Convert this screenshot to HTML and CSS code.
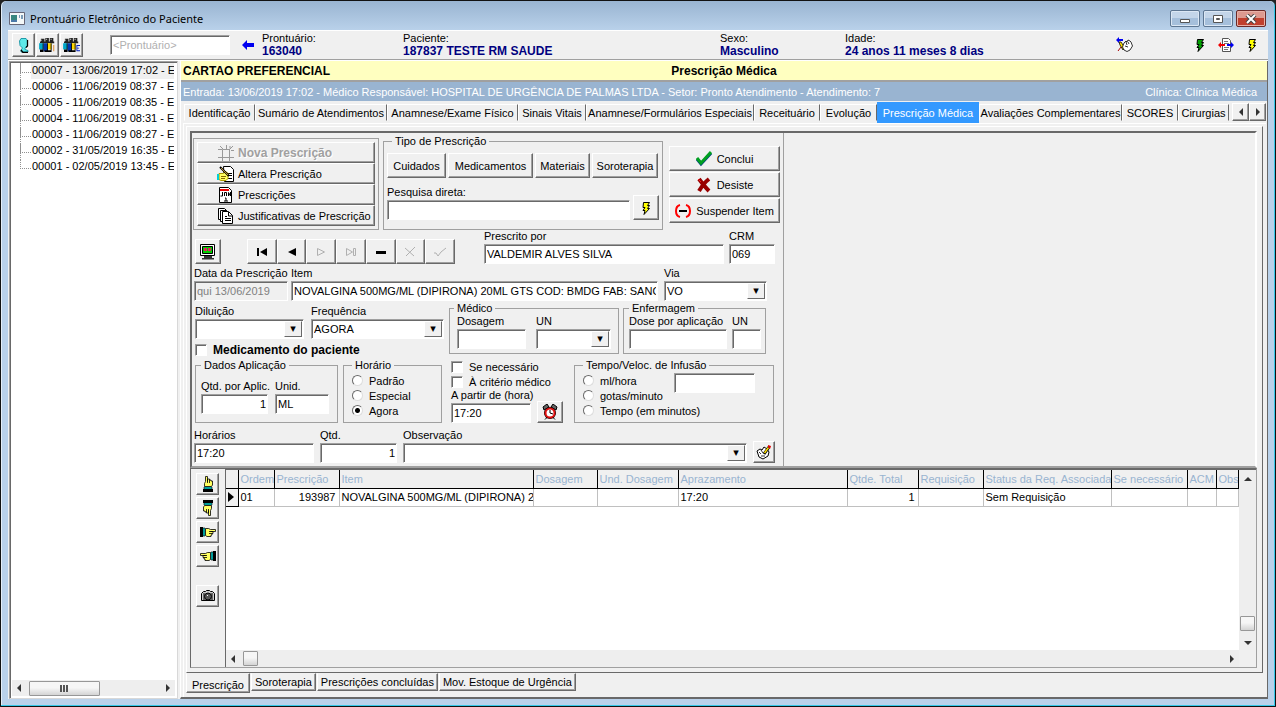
FILE: index.html
```html
<!DOCTYPE html>
<html lang="pt-BR">
<head>
  <meta charset="UTF-8" />
  <meta name="viewport" content="width=device-width, initial-scale=1.0" />
  <title>Prontuário Eletrônico do Paciente</title>
  <link rel="stylesheet" href="styles.css">
</head>
<body>
  <!-- shared icons -->
  <svg class="sprite" width="0" height="0">
    <symbol id="bolt" viewBox="0 0 16 16">
      <path d="M5.500 2.500h6l-2 3h2l-2 3h2l-5.500 6 1-4h-2l2-3h-2z" fill="currentColor" stroke="#000"/>
    </symbol>
    <symbol id="hand" viewBox="0 0 16 16">
      <path d="M0 3h3v10H0z" fill="#000"/>
      <path d="M3 4h2v8H3z" fill="#00e0e0" stroke="#000" stroke-width=".6"/>
      <path d="M5.500 4.500h3l2 1h5v2h-5 2.500v2h-1v1.500h-1v1.500h-4l-1.500-1z" fill="#ffff60" stroke="#000" stroke-width=".8"/>
      <path d="M9 7.500h3M9 9.500h3" stroke="#000" stroke-width=".8"/>
    </symbol>
    <symbol id="people" viewBox="0 0 20 18">
      <g fill="#222"><path d="M2 2h4v4H2zM7 1h4v5H7zM12 1h4v5h-4zM1 5h16v2H1z"/></g>
      <path d="M0 7h5v7H0z" fill="#00a8c8"/>
      <path d="M5 7h5v9H5z" fill="#0038b0"/>
      <path d="M9 7h5v7H9z" fill="#ffd800"/>
      <path d="M1 14h4v3H1zM6 15h8v2H6zM4 7h1v9H4zM9 7h1v9H9zM13 7h1v9h-1z" fill="#000"/>
      <path d="M2 3h1v1H2zM8 2h1v1H8zM13 2h1v1h-1z" fill="#fff"/>
    </symbol>
  </svg>

  <div class="window">
    <header class="titlebar">
      <svg class="app-icon" width="16" height="13" viewBox="0 0 16 13">
        <path d="M.5.500h15v12H.5z" fill="#f4f8f8" stroke="#667"/>
        <path d="M2 3h6v7H2z" fill="#39877f"/><path d="M2 8h6v2H2z" fill="#4a78a8"/>
        <path d="M10 3h1v3h-1zM12 3h2v4h-2z" fill="#7c9cb8"/>
      </svg>
      <h1>Prontuário Eletrônico do Paciente</h1>
      <div class="window-buttons">
        <button aria-label="Minimizar"><svg width="12" height="10" viewBox="0 0 12 10"><path d="M1.500 5.500h9v3h-9z" fill="#fff" stroke="#555"/></svg></button>
        <button aria-label="Restaurar"><svg width="12" height="10" viewBox="0 0 12 10"><path d="M1.500 1.500h9v7h-9z" fill="#fff" stroke="#555"/><path d="M4.500 4.500h3v1h-3z" fill="#9ab" stroke="#555"/></svg></button>
        <button class="close" aria-label="Fechar"><svg width="12" height="10" viewBox="0 0 12 10"><path d="M2 1l8 8M10 1L2 9" stroke="#444" stroke-width="4"/><path d="M2 1l8 8M10 1L2 9" stroke="#fff" stroke-width="2"/></svg></button>
      </div>
    </header>

    <div class="toolbar">
      <div class="tool-buttons">
        <button class="btn" aria-label="Paciente">
          <svg width="16" height="16" viewBox="0 0 16 16"><path d="M5 1.500h5l1.500 2v5L10 10l-1 1v1.500l3 1V15H5v-2l1.500-2L4 8.500 3.500 4z" fill="#5ee8e8" stroke="#089" stroke-width=".8"/><path d="M11.500 3v6L10 10.500M5 13l2 2.500h5" fill="none" stroke="#000" stroke-width="1.300"/></svg>
        </button>
        <button class="btn" aria-label="Internados">
          <svg width="18" height="16" viewBox="0 0 20 18"><use href="#people"/><path d="M16 9h1v7h-1z" fill="#e08020"/></svg>
        </button>
        <button class="btn" aria-label="Externos">
          <svg width="18" height="16" viewBox="0 0 20 18"><use href="#people"/><path d="M15 9h4v1h-3v2h2v1h-2v2h3v1h-4z" fill="#0020c0"/></svg>
        </button>
      </div>
      <input class="box search" type="text" placeholder="&lt;Prontuário&gt;" aria-label="Prontuário">
      <svg class="back" width="12" height="10" viewBox="0 0 12 10"><path d="M0 5l5-5v3h7v4H5v3z" fill="#0000f0"/></svg>
      <dl class="patient">
        <div><dt>Prontuário:</dt><dd>163040</dd></div>
        <div><dt>Paciente:</dt><dd>187837 TESTE RM SAUDE</dd></div>
        <div><dt>Sexo:</dt><dd>Masculino</dd></div>
        <div><dt>Idade:</dt><dd>24 anos 11 meses 8 dias</dd></div>
      </dl>
      <div class="quick">
        <button class="flat first" aria-label="Assinar">
          <svg width="18" height="16" viewBox="0 0 18 16"><path d="M0 3l3-3v2h4v2H3v2z" fill="#0000f0"/><path d="M3 5h2l4 6-2 2-3-5z" fill="#ffe000" stroke="#000" stroke-width=".8"/><path d="M2 14l3-4" stroke="#a00"/><path d="M8 6l2-2 1 1 1-2 2 1 1 1 1.500 4-2.500 4-3 1.500L8 13l-1.500-3z" fill="#fff" stroke="#000" stroke-width=".8"/><path d="M10 5l1 3M12 5l1 2M9 9l3 1" stroke="#000" stroke-width=".8"/></svg>
        </button>
        <button class="flat green" aria-label="Executar"><svg width="16" height="16"><use href="#bolt"/></svg></button>
        <button class="flat" aria-label="Transferir">
          <svg width="16" height="16" viewBox="0 0 16 16"><path d="M4.500 1.500h6l2 2v11h-8z" fill="#fff" stroke="#555"/><path d="M6 4.500h4M6 6.500h5M6 10.500h5M6 12.500h4" stroke="#777"/><path d="M0 8l3-3v2h4v2H3v2z" fill="#f00000"/><path d="M16 8l-3-3v2H9v2h4v2z" fill="#0000f0"/></svg>
        </button>
        <button class="flat yellow" aria-label="Atualizar"><svg width="16" height="16"><use href="#bolt"/></svg></button>
      </div>
    </div>

    <div class="content">
      <aside class="sidebar">
        <ul class="tree">
          <li class="selected"><span>00007 - 13/06/2019 17:02 - E</span></li>
          <li><span>00006 - 11/06/2019 08:37 - E</span></li>
          <li><span>00005 - 11/06/2019 08:35 - E</span></li>
          <li><span>00004 - 11/06/2019 08:31 - E</span></li>
          <li><span>00003 - 11/06/2019 08:27 - E</span></li>
          <li><span>00002 - 31/05/2019 16:35 - E</span></li>
          <li><span>00001 - 02/05/2019 13:45 - E</span></li>
        </ul>
        <div class="scroll-h"><i class="arrow left"></i><b class="thumb wide"></b><i class="arrow right"></i></div>
      </aside>

      <main>
        <div class="banner"><strong>CARTAO PREFERENCIAL</strong><h2>Prescrição Médica</h2><span></span></div>
        <div class="entry">
          <span>Entrada: 13/06/2019 17:02 - Médico Responsável: HOSPITAL DE URGÊNCIA DE PALMAS LTDA - Setor: Pronto Atendimento - Atendimento: 7</span>
          <span>Clínica: Clínica Médica</span>
        </div>
        <div class="tab-strip">
          <nav class="tabs">
            <button>Identificação</button>
            <button>Sumário de Atendimentos</button>
            <button>Anamnese/Exame Físico</button>
            <button>Sinais Vitais</button>
            <button>Anamnese/Formulários Especiais</button>
            <button>Receituário</button>
            <button>Evolução</button>
            <button class="active">Prescrição Médica</button>
            <button>Avaliações Complementares</button>
            <button>SCORES</button>
            <button>Cirurgias</button>
          </nav>
          <div class="spin">
            <button class="btn" aria-label="Abas anteriores"><i class="arrow left"></i></button>
            <button class="btn" aria-label="Próximas abas"><i class="arrow right"></i></button>
          </div>
        </div>

        <div class="page">
          <div class="subpage">
            <div class="work">
              <form class="form">
                <div class="row row-top">
                  <div class="actions">
                    <button type="button" class="btn" disabled>
                      <svg width="18" height="16" viewBox="0 0 18 16"><path d="M5.500 4.500h7v8h-7zM1 4.500h4M1 12.500h4M12 12.500h5M5.500 12v4M12.500 12v4M3 1l3 3M9.500 0v4M12 5l4-4M13 3.500V1M14 5.500h3" fill="none" stroke="#999"/></svg>
                      <span>Nova Prescrição</span></button>
                    <button type="button" class="btn">
                      <svg width="18" height="16" viewBox="0 0 18 16"><path d="M6.500.500h7l3 3v12h-9z" fill="#fff" stroke="#000"/><path d="M11 7.500h4M11 9.500h4M10 12.500h5" stroke="#000"/><path d="M2 7.500h4l3-2 2 2v5l-2 2H4l-2-1z" fill="#ffff60" stroke="#a90"/><path d="M3 1l9 9" stroke="#000" stroke-width="2"/><path d="M4 2l7 7" stroke="#e8b040" stroke-width=".8"/><path d="M0 8h2v6H0z" fill="#00d0d8"/><path d="M4 10.500h5M4 12.500h4" stroke="#860"/></svg>
                      <span>Altera Prescrição</span></button>
                    <button type="button" class="btn">
                      <svg width="18" height="16" viewBox="0 0 18 16"><path d="M2.500.500h9l3 3v12h-12z" fill="#fff" stroke="#000"/><path d="M3 3h9" stroke="#e00" stroke-width="2"/><path d="M5.500 5v4h-2M7.500 9V5.500h2V9M11.500 9V5.500l2 3.500V5M8 11h1v3M7 14h4" fill="none" stroke="#000"/></svg>
                      <span>Prescrições</span></button>
                    <button type="button" class="btn">
                      <svg width="18" height="16" viewBox="0 0 18 16"><path d="M1.500.500h6l3 3v8h-9z" fill="#fff" stroke="#000"/><path d="M3.500 2.500h6l3 3v8h-9z" fill="#fff" stroke="#000"/><path d="M5.500 3.500h6l4 4v8h-10z" fill="#fff" stroke="#000"/><path d="M11.500 4v4h4M8 8.500h2M8 10.500h6M8 12.500h6" fill="none" stroke="#000"/></svg>
                      <span>Justificativas de Prescrição</span></button>
                  </div>

                  <fieldset class="kind">
                    <legend>Tipo de Prescrição</legend>
                    <div class="kind-buttons">
                      <button type="button" class="btn">Cuidados</button>
                      <button type="button" class="btn">Medicamentos</button>
                      <button type="button" class="btn">Materiais</button>
                      <button type="button" class="btn">Soroterapia</button>
                    </div>
                    <div class="direct">
                      <div class="field"><label for="pesquisa">Pesquisa direta:</label><input class="box" id="pesquisa" type="text"></div>
                      <button type="button" class="btn tool yellow" aria-label="Pesquisar"><svg width="16" height="16"><use href="#bolt"/></svg></button>
                    </div>
                  </fieldset>

                  <div class="finish">
                    <button type="button" class="btn"><svg width="16" height="16" viewBox="0 0 16 16"><path d="M1 8l4 5L15 2" fill="none" stroke="#004080" stroke-width="3"/><path d="M1 7l4 5L15 1" fill="none" stroke="#00a020" stroke-width="3"/></svg>Conclui</button>
                    <button type="button" class="btn"><svg width="16" height="16" viewBox="0 0 16 16"><path d="M3 2c3 4 6 8 10 12M13 2C9 5 6 9 3 14" fill="none" stroke="#900" stroke-width="4"/><path d="M2 2l3 3" stroke="#f02020"/></svg>Desiste</button>
                    <button type="button" class="btn"><svg width="16" height="16" viewBox="0 0 16 16"><path d="M5 2Q1 3 1 8t4 6M11 2q4 1 4 6t-4 6" fill="none" stroke="#f00" stroke-width="2"/><path d="M4 7h8v2H4z"/></svg>Suspender Item</button>
                  </div>
                </div>

                <div class="row row-nav">
                  <button type="button" class="btn tool" aria-label="Monitor">
                    <svg width="16" height="16" viewBox="0 0 16 16"><path d="M.5.500h14v11H.5z" fill="#fff" stroke="#000"/><path d="M2.500 2.500h10v7h-10z" fill="#00d000" stroke="#000"/><path d="M4 4h3v3H4zM8 4h3v3H8z" fill="#e02060"/><path d="M4 12h8v2H4zM2 14h12v1.500H2z" fill="#333"/></svg>
                  </button>
                  <div class="navigator">
                    <button type="button" class="btn" aria-label="Primeiro"><svg width="12" height="10"><path d="M1 1h2v8H1zM11 1v8L4 5z"/></svg></button>
                    <button type="button" class="btn" aria-label="Anterior"><svg width="12" height="10"><path d="M10 1v8L2 5z"/></svg></button>
                    <button type="button" class="btn" aria-label="Próximo" disabled><svg width="12" height="10"><path class="ghost" d="M2.500 1.500v7l7-3.500z"/></svg></button>
                    <button type="button" class="btn" aria-label="Último" disabled><svg width="12" height="10"><path class="ghost" d="M1.500 1.500v7l6-3.500zM8.500 1.500h2v7h-2z"/></svg></button>
                    <button type="button" class="btn" aria-label="Remover"><svg width="12" height="10"><path d="M1 4h10v3H1z"/></svg></button>
                    <button type="button" class="btn" aria-label="Cancelar" disabled><svg width="12" height="10"><path class="ghost" d="M1 1l9 8M11 0L2 9"/></svg></button>
                    <button type="button" class="btn" aria-label="Gravar" disabled><svg width="12" height="10"><path class="ghost" d="M0 6h2l2 3 3-4 5-4"/></svg></button>
                  </div>
                  <div class="field doctor"><label for="medico">Prescrito por</label><input class="box" id="medico" type="text" value="VALDEMIR ALVES SILVA"></div>
                  <div class="field crm"><label for="crm">CRM</label><input class="box" id="crm" type="text" value="069"></div>
                </div>

                <div class="row row-item">
                  <div class="field"><label for="data">Data da Prescrição</label><input class="box" id="data" type="text" value="qui 13/06/2019" disabled></div>
                  <div class="field"><label for="item">Item</label><input class="box" id="item" type="text" value="NOVALGINA 500MG/ML (DIPIRONA) 20ML GTS COD: BMDG FAB: SANOI"></div>
                  <div class="field"><label for="via">Via</label><span class="combo"><select id="via"><option>VO</option></select></span></div>
                </div>

                <div class="row row-dose">
                  <div class="dilution">
                    <div class="field"><label for="diluicao">Diluição</label><span class="combo"><select id="diluicao"><option></option></select></span></div>
                    <div class="field"><label for="frequencia">Frequência</label><span class="combo"><select id="frequencia"><option>AGORA</option></select></span></div>
                    <label class="check own"><input type="checkbox">Medicamento do paciente</label>
                  </div>
                  <fieldset class="medico">
                    <legend>Médico</legend>
                    <div class="field"><label for="dosagem">Dosagem</label><input class="box" id="dosagem" type="text"></div>
                    <div class="field"><label for="un">UN</label><span class="combo"><select id="un"><option></option></select></span></div>
                  </fieldset>
                  <fieldset class="enfermagem">
                    <legend>Enfermagem</legend>
                    <div class="field"><label for="dose">Dose por aplicação</label><input class="box" id="dose" type="text"></div>
                    <div class="field"><label for="un2">UN</label><input class="box" id="un2" type="text"></div>
                  </fieldset>
                </div>

                <div class="row row-apply">
                  <fieldset class="dados">
                    <legend>Dados Aplicação</legend>
                    <div class="field"><label for="qtdaplic">Qtd. por Aplic.</label><input class="box num" id="qtdaplic" type="text" value="1"></div>
                    <div class="field"><label for="unid">Unid.</label><input class="box" id="unid" type="text" value="ML"></div>
                  </fieldset>
                  <fieldset class="radios">
                    <legend>Horário</legend>
                    <label class="check"><input type="radio" name="horario">Padrão</label>
                    <label class="check"><input type="radio" name="horario">Especial</label>
                    <label class="check"><input type="radio" name="horario" checked>Agora</label>
                  </fieldset>
                  <div class="start">
                    <label class="check"><input type="checkbox">Se necessário</label>
                    <label class="check"><input type="checkbox">À critério médico</label>
                    <div class="start-time">
                      <div class="field"><label for="hora">A partir de (hora)</label><input class="box" id="hora" type="text" value="17:20"></div>
                      <button type="button" class="btn tool" aria-label="Relógio">
                        <svg width="16" height="16" viewBox="0 0 16 16"><path d="M1 3l4-3 2 3-5 3zM15 3l-4-3-2 3 5 3z" fill="#666" stroke="#000"/><circle cx="8" cy="9" r="6" fill="#000"/><circle cx="8" cy="9" r="4.500" fill="#fff" stroke="#e01010" stroke-width="2"/><path d="M8 6v3l3 1M3 15.500l2-2M13 15.500l-2-2" fill="none" stroke="#000"/></svg>
                      </button>
                    </div>
                  </div>
                  <fieldset class="infusion">
                    <legend>Tempo/Veloc. de Infusão</legend>
                    <div>
                      <label class="check"><input type="radio" name="veloc">ml/hora</label>
                      <label class="check"><input type="radio" name="veloc">gotas/minuto</label>
                      <label class="check"><input type="radio" name="veloc">Tempo (em minutos)</label>
                    </div>
                    <input class="box" type="text" aria-label="Tempo ou velocidade">
                  </fieldset>
                </div>

                <div class="row row-notes">
                  <div class="field"><label for="horarios">Horários</label><input class="box" id="horarios" type="text" value="17:20"></div>
                  <div class="field"><label for="qtd">Qtd.</label><input class="box num" id="qtd" type="text" value="1"></div>
                  <div class="field"><label for="obs">Observação</label><span class="combo"><select id="obs"><option></option></select></span></div>
                  <button type="button" class="btn" aria-label="Anotar">
                    <svg width="16" height="16" viewBox="0 0 16 16"><path d="M1 7l3-2 2 1 2-3 3 2 2 3-1 4-5 3-4-2z" fill="#fff" stroke="#000"/><path d="M3 8l2 2M5 6l2 3M5 12h4" fill="none" stroke="#000" stroke-width=".8"/><path d="M8 10l5-7" stroke="#000" stroke-width="3"/><path d="M8.500 9l4-5.500" stroke="#ffe000" stroke-width="1.500"/><path d="M12 1l3 1-1 3-2-2z" fill="#e00000"/></svg>
                  </button>
                </div>
              </form>
            </div>

            <div class="grid-area">
              <div class="strip">
                <button class="btn" aria-label="Para cima"><svg width="16" height="16"><use href="#hand" transform="rotate(-90 8 8)"/></svg></button>
                <button class="btn" aria-label="Para baixo"><svg width="16" height="16"><use href="#hand" transform="rotate(90 8 8)"/></svg></button>
                <button class="btn" aria-label="Avançar"><svg width="16" height="16"><use href="#hand"/></svg></button>
                <button class="btn" aria-label="Voltar"><svg width="16" height="16"><use href="#hand" transform="translate(16 0) scale(-1 1)"/></svg></button>
                <button class="btn camera" aria-label="Imagem"><svg width="16" height="16" viewBox="0 0 16 16"><path d="M1.500 5.500l2-2h2l1-1h3l1 1h2l2 2v7h-13z" fill="#ccc" stroke="#000"/><path d="M4 5v7M12 5v7" stroke="#000"/><circle cx="8" cy="8.500" r="3.500" fill="#555" stroke="#000"/><path d="M7 7h1v1H7z" fill="#fff"/></svg></button>
              </div>
              <div class="grid">
                <div class="grid-body">
                  <table>
                    <colgroup>
                      <col class="c-mark"><col class="c-ordem"><col class="c-presc"><col class="c-item"><col class="c-dos"><col class="c-und"><col class="c-apraz"><col class="c-qtde"><col class="c-req"><col class="c-status"><col class="c-nec"><col class="c-acm"><col>
                    </colgroup>
                    <thead>
                      <tr><th></th><th>Ordem</th><th>Prescrição</th><th>Item</th><th>Dosagem</th><th>Und. Dosagem</th><th>Aprazamento</th><th>Qtde. Total</th><th>Requisição</th><th>Status da Req. Associada</th><th>Se necessário</th><th>ACM</th><th>Obs</th></tr>
                    </thead>
                    <tbody>
                      <tr><th><i class="mark"></i></th><td>01</td><td class="num">193987</td><td>NOVALGINA 500MG/ML (DIPIRONA) 2</td><td></td><td></td><td>17:20</td><td class="num">1</td><td></td><td>Sem Requisição</td><td></td><td></td><td></td></tr>
                    </tbody>
                  </table>
                </div>
                <div class="scroll-v"><i class="arrow up"></i><b class="thumb"></b><i class="arrow down"></i></div>
                <div class="scroll-h"><i class="arrow left"></i><b class="thumb"></b><i class="arrow right"></i></div>
                <div class="corner"></div>
              </div>
            </div>
          </div>
          <nav class="bottom-tabs">
            <button class="active">Prescrição</button>
            <button>Soroterapia</button>
            <button>Prescrições concluídas</button>
            <button>Mov. Estoque de Urgência</button>
          </nav>
        </div>
      </main>
    </div>
  </div>
</body>
</html>
```
FILE: styles.css
```css
* {
  margin: 0;
  padding: 0;
  box-sizing: border-box;
}

:root {
  --face: #f0f0f0;
  --shadow: #a0a0a0;
  --dark: #696969;
  --blue: #99b4d1;
  --navy: #000080;
}

body {
  height: 100vh;
  background: #222;
  font: 11px/12px "Liberation Sans", Arial, sans-serif;
  color: #000;
  overflow: hidden;
}

button,
input,
select {
  font: inherit;
  color: inherit;
}

svg {
  flex: none;
  display: block;
}

.sprite {
  position: absolute;
}

/* window frame */
.window {
  display: flex;
  flex-direction: column;
  height: 100%;
  padding: 0 7px 7px;
  border: 1px solid #111;
  border-radius: 6px 6px 0 0;
  background: #b9d1ea;
  box-shadow: inset -1px -1px 0 #35c8e8, inset 1px 1px 0 #e4eef8;
}

.titlebar {
  display: flex;
  align-items: center;
  gap: 5px;
  height: 29px;
  margin: 0 -6px;
  padding: 6px 8px 0 7px;
  background: linear-gradient(#99b4d1, #b9d1ea);
  border-radius: 5px 5px 0 0;
}

.titlebar h1 {
  flex: 1;
  font: 11px/16px "Noto Sans", "Open Sans", sans-serif;
}

.window-buttons {
  display: flex;
  gap: 3px;
}

.window-buttons button {
  display: flex;
  align-items: center;
  justify-content: center;
  width: 30px;
  height: 17px;
  border: 1px solid #5d7692;
  border-radius: 2px;
  background: linear-gradient(#c3d5e9 50%, #a5bfdb 50%);
  box-shadow: inset 0 0 0 1px #dbe7f4;
}

.window-buttons .close {
  border-color: #6b2a28;
  background: linear-gradient(#dd9a90 50%, #c0402e 50%);
  box-shadow: inset 0 0 0 1px #e8b0a6;
}

/* classic 3D controls */
.btn {
  display: flex;
  align-items: center;
  justify-content: center;
  border: 1px solid;
  border-color: #fff var(--dark) var(--dark) #fff;
  background: var(--face);
  box-shadow: inset -1px -1px 0 var(--shadow);
  white-space: nowrap;
}

.btn:disabled {
  color: var(--shadow);
}

.box {
  width: 100%;
  height: 20px;
  padding: 0 1px 0 2px;
  border: 1px solid;
  border-color: var(--shadow) #fff #fff var(--shadow);
  border-radius: 0;
  background: #fff;
  box-shadow: inset 1px 1px 0 var(--dark);
  outline: none;
}

.box:disabled {
  background: var(--face);
  color: #808080;
}

.box.num {
  text-align: right;
}

.combo {
  display: grid;
  height: 20px;
}

.combo select {
  grid-area: 1 / 1;
  appearance: none;
  width: 100%;
  padding: 0 20px 0 2px;
  border: 1px solid;
  border-color: var(--shadow) #fff #fff var(--shadow);
  border-radius: 0;
  background: #fff;
  box-shadow: inset 1px 1px 0 var(--dark);
}

.combo::after {
  content: "▾";
  grid-area: 1 / 1;
  justify-self: end;
  width: 16px;
  margin: 2px;
  border: 1px solid;
  border-color: #fff var(--dark) var(--dark) #fff;
  background: var(--face);
  font: 11px/14px "DejaVu Sans", sans-serif;
  text-align: center;
  pointer-events: none;
}

.field {
  display: flex;
  flex-direction: column;
  gap: 2px;
  min-width: 0;
  white-space: nowrap;
}

.tool {
  width: 26px;
  height: 25px;
}

.yellow {
  color: #ffff00;
}

.green {
  color: #00a000;
}

.arrow {
  width: 0;
  height: 0;
  border: 4px solid transparent;
}

.arrow.left {
  border-left: 0;
  border-right-color: #333;
}

.arrow.right {
  border-right: 0;
  border-left-color: #333;
}

.arrow.up {
  border-top: 0;
  border-bottom-color: #333;
}

.arrow.down {
  border-bottom: 0;
  border-top-color: #333;
}

/* toolbar */
.toolbar {
  display: flex;
  align-items: center;
  height: 30px;
  padding: 0 4px;
  border-top: 1px solid #fff;
  border-bottom: 1px solid var(--shadow);
  background: var(--face);
}

.tool-buttons {
  display: flex;
  gap: 1px;
}

.tool-buttons .btn {
  width: 23px;
  height: 24px;
}

.search {
  width: 120px;
  margin: 0 12px 0 27px;
}

.search::placeholder {
  color: #b0b0b0;
}

.patient {
  display: grid;
  grid-template-columns: 141px 317px 125px 1fr;
  flex: 1;
  margin-left: 8px;
  line-height: 13px;
}

.patient dd {
  color: var(--navy);
  font-size: 12px;
  font-weight: bold;
}

.quick {
  display: flex;
  gap: 10px;
  padding-right: 4px;
}

.flat {
  border: 0;
  background: none;
}

.flat.first {
  margin-right: 48px;
}

.content {
  display: flex;
  flex: 1;
  gap: 2px;
  min-height: 0;
  border-top: 1px solid #fff;
  background: var(--face);
}

/* visit tree */
.sidebar {
  display: flex;
  flex-direction: column;
  flex: none;
  width: 169px;
  margin-left: 1px;
  border: 1px solid;
  border-color: var(--shadow) #d8d8d8 #d8d8d8 var(--shadow);
  background: #fff;
  box-shadow: inset 1px 1px 0 var(--dark);
}

.tree {
  flex: 1;
  margin: 1px 3px 0 10px;
  list-style: none;
  overflow: hidden;
}

.tree li {
  display: flex;
  height: 16px;
  line-height: 15px;
  white-space: nowrap;
}

.tree li::before {
  content: "";
  flex: none;
  width: 10px;
  height: 9px;
  border: 1px dotted #909090;
  border-width: 0 0 1px 1px;
}

.tree li:not(:last-child) {
  background: repeating-linear-gradient(#909090 0 1px, #fff 1px 2px) 0 0 / 1px 100% no-repeat;
}

.tree li span {
  flex: 1;
  padding-left: 1px;
}

.tree .selected span {
  background: var(--face);
}

.scroll-h {
  display: flex;
  align-items: center;
  height: 16px;
  margin: 0 2px 2px;
  padding: 0 5px;
  background: #eee;
}

.scroll-h .right {
  margin-left: auto;
}

.thumb {
  width: 15px;
  height: 15px;
  border: 1px solid #979797;
  border-radius: 1px;
  background: linear-gradient(#f6f6f6 45%, #d4d4d4);
}

.scroll-h .thumb {
  margin-left: 8px;
}

.thumb.wide {
  width: 71px;
  background: repeating-linear-gradient(90deg, #555 0 2px, transparent 2px 3px) center / 9px 7px no-repeat, linear-gradient(#f6f6f6 45%, #d4d4d4);
}

/* main column */
main {
  display: flex;
  flex-direction: column;
  flex: 1;
  min-width: 0;
  border-left: 1px solid #fff;
  border-right: 1px solid var(--dark);
  border-bottom: 2px solid var(--dark);
}

.banner {
  display: grid;
  grid-template-columns: 1fr auto 1fr;
  align-items: center;
  height: 20px;
  padding: 0 2px;
  border-bottom: 1px solid var(--shadow);
  background: #ffffc0;
}

.banner strong,
.banner h2 {
  font-size: 12px;
  font-weight: bold;
}

.entry {
  display: flex;
  align-items: center;
  justify-content: space-between;
  height: 20px;
  padding: 0 10px 0 2px;
  border-top: 1px solid var(--shadow);
  background: var(--blue);
  color: #fff;
}

.tab-strip {
  display: flex;
  gap: 3px;
  height: 22px;
  padding: 2px 1px 0 3px;
}

.tabs {
  display: grid;
  grid-template-columns: 71px 132px 131px 68px 168px 66px 57px 102px 143px 56px 51px;
  flex: 1;
}

.tabs button {
  margin: 1px 0 2px;
  border: 1px solid;
  border-color: #fff var(--dark) transparent #fff;
  background: var(--face);
  white-space: nowrap;
}

.tabs .active {
  margin: -1px 0 0;
  border-color: #3399ff;
  background: #3399ff;
  color: #fff;
}

.spin {
  display: flex;
}

.spin .btn {
  width: 17px;
  height: 18px;
}

.page {
  display: flex;
  flex-direction: column;
  flex: 1;
  min-height: 0;
  margin: 0 1px 0 2px;
  border-top: 1px solid #fff;
  border-left: 1px solid #fff;
}

.subpage {
  display: flex;
  flex-direction: column;
  flex: 1;
  min-height: 0;
  margin: 2px 3px 0 2px;
  padding: 4px 5px 4px 3px;
  border: 1px solid;
  border-color: #fff var(--dark) var(--dark) #fff;
}

.work {
  border: 2px solid;
  border-color: var(--dark) #fff var(--shadow) var(--dark);
}

/* prescription form */
.form {
  width: 592px;
  padding: 2px 0 3px 1px;
  border-right: 1px solid var(--shadow);
}

.row {
  display: flex;
}

fieldset {
  min-width: 0;
  border: 1px solid var(--shadow);
}

legend {
  padding: 0 3px;
}

.row-top {
  align-items: flex-start;
}

.actions {
  width: 186px;
  margin: 3px 4px 0 0;
  padding: 3px;
  border: 1px solid var(--shadow);
}

.actions .btn {
  justify-content: flex-start;
  gap: 3px;
  width: 100%;
  height: 21px;
  padding-left: 19px;
}

.actions .btn:disabled {
  font-size: 12px;
  font-weight: bold;
  text-shadow: 1px 1px 0 #fff;
}

.kind {
  width: 280px;
  height: 95px;
  padding: 6px 3px 0;
}

.kind legend {
  margin-left: 5px;
}

.kind-buttons {
  display: grid;
  grid-template-columns: 59px 85px 55px 66px;
  gap: 2px;
  margin-bottom: 8px;
}

.kind-buttons .btn {
  height: 25px;
}

.direct {
  display: flex;
  align-items: flex-end;
  gap: 3px;
}

.direct .field {
  flex: 1;
}

.finish {
  display: flex;
  flex-direction: column;
  gap: 1px;
  width: 111px;
  margin: 11px 0 0 6px;
}

.finish .btn {
  gap: 5px;
  height: 25px;
}

.row-nav {
  align-items: flex-end;
  padding-left: 2px;
}

.navigator {
  display: grid;
  grid-template-columns: repeat(7, 1fr);
  width: 208px;
  height: 25px;
  margin: 0 29px 0 26px;
}

.ghost {
  fill: none;
  stroke: #b0b0b0;
}

.doctor {
  width: 240px;
  margin-right: 5px;
}

.crm {
  width: 46px;
}

.row-item {
  display: grid;
  grid-template-columns: 94px 367px 103px;
  gap: 3px;
  margin-top: 3px;
  padding-left: 1px;
}

.row-item .field:last-child {
  padding-left: 3px;
  margin-right: -3px;
}

.row-dose {
  gap: 4px;
  margin-top: 1px;
  padding-left: 2px;
}

.dilution {
  display: grid;
  grid-template-columns: 109px 133px;
  align-content: start;
  gap: 3px 7px;
  margin-top: 3px;
  width: 250px;
}

.own {
  grid-column: span 2;
  font-size: 12px;
  font-weight: bold;
}

.medico,
.enfermagem {
  display: grid;
  padding: 1px 5px 0 7px;
  height: 52px;
}

.medico {
  grid-template-columns: 69px 75px;
  gap: 10px;
  width: 170px;
}

.medico legend {
  margin-left: -3px;
}

.enfermagem {
  grid-template-columns: 98px 29px;
  gap: 5px;
  width: 143px;
  padding-left: 5px;
}

.check {
  display: flex;
  align-items: center;
  gap: 6px;
  height: 15px;
  white-space: nowrap;
}

.check input {
  appearance: none;
  flex: none;
  width: 12px;
  height: 12px;
  border: 1px solid;
  border-color: var(--shadow) #fff #fff var(--shadow);
  background: #fff;
  box-shadow: inset 1px 1px 0 var(--dark);
}

.check input[type="radio"] {
  width: 11px;
  height: 11px;
  border-color: var(--dark) #ddd #ddd var(--dark);
  border-radius: 50%;
  box-shadow: none;
}

.check input[type="radio"]:checked {
  background: radial-gradient(#000 2px, #fff 3px);
}

.row-apply {
  margin-top: 2px;
  padding-left: 2px;
}

.row-apply fieldset {
  height: 64px;
}

.dados {
  display: grid;
  grid-template-columns: 67px 54px;
  gap: 7px;
  width: 143px;
  margin-right: 5px;
  padding: 9px 5px 0;
}

.radios {
  width: 99px;
  padding: 2px 8px 0;
}

.start {
  width: 113px;
  margin: 0 10px 0 9px;
}

.start-time {
  display: flex;
  align-items: flex-end;
  gap: 6px;
}

.start-time .field {
  width: 80px;
}

.start-time .tool {
  height: 22px;
}

.infusion {
  width: 200px;
  display: grid;
  grid-template-columns: 91px 81px;
  padding: 2px 8px 0;
}

.row-notes {
  align-items: flex-end;
  gap: 6px;
  margin-top: 6px;
  padding-left: 1px;
}

.row-notes .field:nth-child(1) {
  width: 120px;
}

.row-notes .field:nth-child(2) {
  width: 77px;
}

.row-notes .field:nth-child(3) {
  width: 344px;
}

.row-notes .btn {
  width: 22px;
  height: 22px;
}

/* prescription grid */
.grid-area {
  display: flex;
  flex: 1;
  min-height: 0;
  border: 1px solid;
  border-color: var(--dark) var(--shadow) var(--shadow) var(--dark);
}

.strip {
  display: flex;
  flex-direction: column;
  gap: 2px;
  width: 34px;
  padding: 4px 0 0 5px;
}

.strip .btn {
  width: 23px;
  height: 22px;
}

.strip .camera {
  margin-top: 16px;
}

.grid {
  display: grid;
  grid-template-columns: 1fr 17px;
  grid-template-rows: 1fr 17px;
  flex: 1;
  min-width: 0;
  border-top: 1px solid var(--dark);
  border-left: 1px solid var(--dark);
  background: #fff;
}

.grid-body {
  min-width: 0;
  overflow: hidden;
}

.grid table {
  width: 100%;
  table-layout: fixed;
  border-collapse: collapse;
}

.grid th,
.grid td {
  height: 18px;
  padding: 0 0 0 2px;
  border: 0 solid #c0c0c0;
  border-width: 0 1px 1px 0;
  font-weight: normal;
  text-align: left;
  white-space: nowrap;
  overflow: hidden;
}

.grid th {
  border-color: #000;
  background: var(--face);
  color: var(--blue);
}

.grid td.num {
  padding-right: 3px;
  text-align: right;
}

.c-mark { width: 12px; }
.c-ordem { width: 36px; }
.c-presc { width: 65px; }
.c-item { width: 194px; }
.c-dos { width: 64px; }
.c-und { width: 81px; }
.c-apraz { width: 169px; }
.c-qtde { width: 71px; }
.c-req { width: 65px; }
.c-status { width: 128px; }
.c-nec { width: 76px; }
.c-acm { width: 29px; }

.mark {
  display: block;
  width: 0;
  border: 5px solid transparent;
  border-left: 6px solid #000;
  border-right: 0;
}

.scroll-v {
  display: flex;
  flex-direction: column;
  align-items: center;
  padding: 7px 0 5px;
  background: #eee;
}

.scroll-v .thumb {
  margin: auto 0 10px;
}

.grid .scroll-h {
  height: 17px;
  margin: 0;
}

.corner {
  background: var(--face);
}

/* bottom tabs */
.bottom-tabs {
  display: flex;
  align-items: flex-start;
  gap: 1px;
  height: 24px;
  padding-left: 2px;
}

.bottom-tabs button {
  height: 18px;
  padding: 0 3px;
  border: 1px solid;
  border-color: transparent var(--dark) var(--dark) #fff;
  background: var(--face);
  box-shadow: inset -1px -1px 0 var(--shadow);
}

.bottom-tabs .active {
  height: 20px;
  padding: 4px 5px 0;
}
```
